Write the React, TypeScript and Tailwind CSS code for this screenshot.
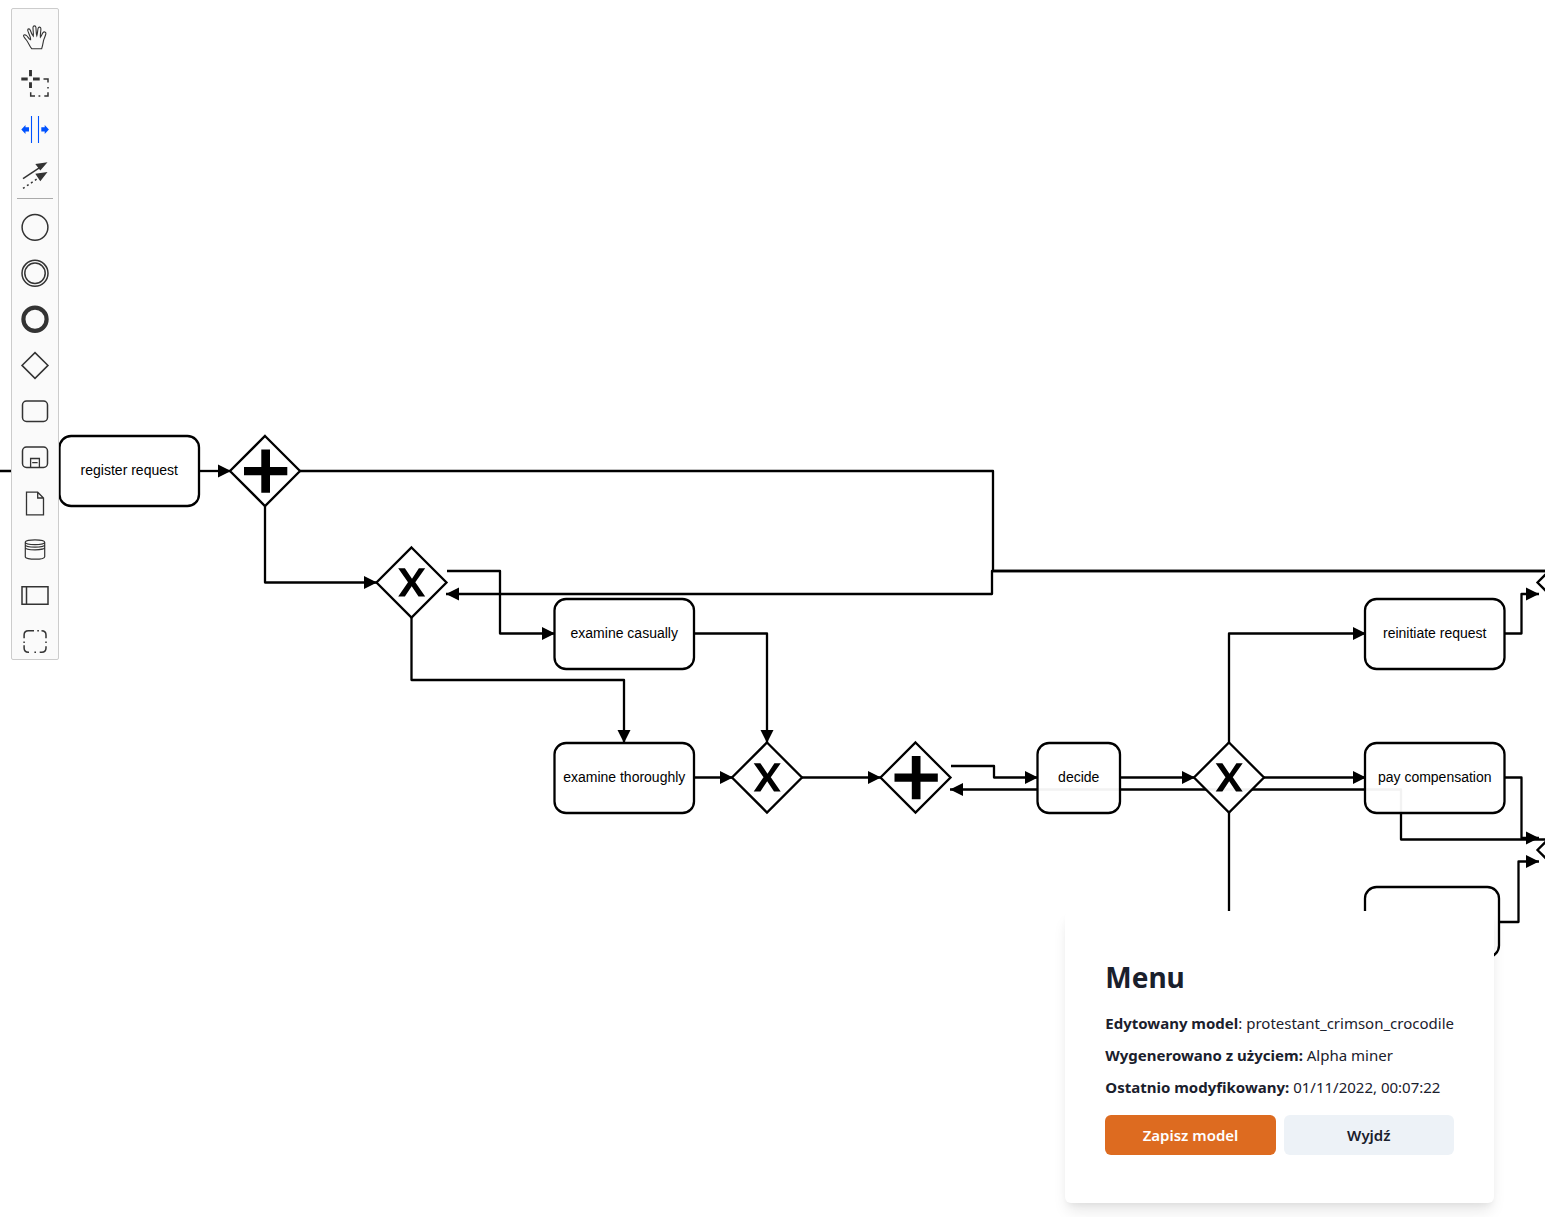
import type { ReactNode } from "react";

type Point = [number, number];

const TOOLS: { label: string; icon: ReactNode; active?: boolean }[] = [
  {
    label: "Activate the hand tool",
    icon: (
      <path d="M11.7 26.7C9.5 24 8.5 20.500 6 17.500C4.800 16 3.300 14.800 3.500 13.700C4 12.300 5.800 12.700 7 14C8.200 15.300 9 17.300 10.600 17.700C11 15 8 10.500 7.700 8.300C7.600 6.500 9.700 6.300 10.200 8C11 10.300 11.800 12.500 13.300 14.200C13.800 11.500 12.800 8 13 5.300C13.200 3.500 15.700 3.400 15.900 5.300C16.200 8 16 11 16.800 13.700C17.600 11.500 17.500 9 18.100 6.300C18.500 4.500 20.900 4.800 20.900 6.700C20.900 9.500 20 12.500 20.400 15.200C21.500 14 22 12 23 10.700C24 9.300 26.100 10 25.900 11.700C25.500 14 24 16.500 23.500 18.700C23 21.500 22.600 24 21.700 26.700Z" strokeWidth="1.100" />
    ),
  },
  {
    label: "Activate the lasso tool",
    icon: (
      <>
        <path d="M10.500 2V8.200M10.500 14.200V20M1.300 11H7.700M13 11H19.700" strokeWidth="2.900" />
        <path d="M23.500 11H28V14.500M28 19V20.500M28 24.300V28H24.300M20.300 28H18.500M15 28H10.700V24.300" strokeWidth="1.500" />
      </>
    ),
  },
  {
    label: "Activate the create/remove space tool",
    active: true,
    icon: (
      <>
        <path d="M11.500 2V29M18.500 2V29" strokeWidth="1.100" />
        <path d="M1.300 15.400L5.500 10.900V13.300H9V17.500H5.500V19.900ZM28.900 15.400L24.700 10.900V13.300H21.300V17.500H24.700V19.900Z" fill="currentColor" stroke="none" />
      </>
    ),
  },
  {
    label: "Activate the global connect tool",
    icon: (
      <>
        <path d="M3 18.700L20 7.400" strokeWidth="1.500" />
        <path d="M3 28.400L19 17.600" strokeWidth="1.500" strokeDasharray="2 2.800" />
        <path d="M27.500 2.200L15.300 3.900L20.300 10.600ZM27.500 12L15.300 13.700L20.300 21.200Z" fill="currentColor" stroke="none" />
      </>
    ),
  },
  { label: "Create start event", icon: <circle cx="15" cy="15.300" r="12.900" /> },
  {
    label: "Create intermediate event",
    icon: (
      <>
        <circle cx="15" cy="15.300" r="13" />
        <circle cx="15" cy="15.300" r="10.200" />
      </>
    ),
  },
  { label: "Create end event", icon: <circle cx="15" cy="15.300" r="11.600" strokeWidth="4.200" /> },
  { label: "Create gateway", icon: <path d="M15 2.600L28 15.400L15 28.400L2 15.400Z" /> },
  { label: "Create task", icon: <rect x="2.500" y="5" width="25" height="20.500" rx="4" /> },
  {
    label: "Create expanded sub-process",
    icon: (
      <>
        <rect x="2.500" y="5" width="25" height="20.500" rx="4" />
        <path d="M10.600 25.500V16.500H19.400V25.500M12.200 20.700H17.600" strokeWidth="1.300" />
      </>
    ),
  },
  {
    label: "Create data object",
    icon: <path d="M6.500 4.200H17.700L23.500 10V26.800H6.500ZM17.700 4.200V10H23.500" strokeWidth="1.300" />,
  },
  {
    label: "Create data store",
    icon: (
      <path d="M5.300 8.200C5.300 5 24.700 5 24.700 8.200V22.700C24.700 26 5.300 26 5.300 22.700ZM5.300 8.200C5.300 11.400 24.700 11.400 24.700 8.200M5.300 10.800C5.300 14 24.700 14 24.700 10.800M5.300 13.400C5.300 16.600 24.700 16.600 24.700 13.400" strokeWidth="1.200" />
    ),
  },
  {
    label: "Create pool/participant",
    icon: <path d="M2 6.800H28V24.300H2ZM6.500 6.800V24.300" />,
  },
  {
    label: "Create group",
    icon: (
      <path d="M4.100 12.300V9Q4.100 4.700 8.400 4.700H14M17.300 4.700H18.900M21.500 4.700Q26 4.700 26 9V12.300M26 15.600V17M26 20.300V22Q26 26.200 21.700 26.200H19.700M16 26.200H14.400M9 26.200H8.400Q4.100 26.200 4.100 22V19.300M4.100 15.600V17" strokeWidth="1.500" />
    ),
  },
];

const FLOWS: { points: Point[]; plain?: boolean }[] = [
  { points: [[0, 471], [59, 471]], plain: true },
  { points: [[199, 471], [231, 471]] },
  { points: [[300, 471], [993, 471], [993, 571], [1600, 571]], plain: true },
  { points: [[1600, 571], [992, 571], [992, 594], [446, 594]] },
  { points: [[265, 506], [265, 582.5], [377, 582.5]] },
  { points: [[447, 571], [500, 571], [500, 633.5], [555, 633.5]] },
  { points: [[411.5, 617], [411.5, 680], [624, 680], [624, 743]] },
  { points: [[694, 633.5], [767, 633.5], [767, 743]] },
  { points: [[694, 777.5], [733, 777.5]] },
  { points: [[802, 777.5], [881, 777.5]] },
  { points: [[951, 766], [994, 766], [994, 777.5], [1038, 777.5]] },
  { points: [[1120, 777.5], [1195, 777.5]] },
  { points: [[1229, 743], [1229, 633.5], [1366, 633.5]] },
  { points: [[1264, 777.5], [1366, 777.5]] },
  { points: [[1229, 812], [1229, 1000]], plain: true },
  { points: [[1504, 633.5], [1521.5, 633.5], [1521.5, 594], [1539, 594]] },
  { points: [[1504, 777.5], [1521.5, 777.5], [1521.5, 838], [1539, 838]] },
  { points: [[1600, 839.5], [1401, 839.5], [1401, 789.5], [950, 789.5]] },
  { points: [[1499, 922], [1518.5, 922], [1518.5, 861.5], [1539, 861.5]] },
];

const TASKS = [
  { x: 59.5, y: 436, width: 139.5, label: "register request" },
  { x: 554.5, y: 599, width: 139.5, label: "examine casually" },
  { x: 554.5, y: 743, width: 139.5, label: "examine thoroughly" },
  { x: 1037.5, y: 743, width: 82.5, label: "decide" },
  { x: 1365, y: 599, width: 139.5, label: "reinitiate request" },
  { x: 1365, y: 743, width: 139.5, label: "pay compensation" },
  { x: 1365, y: 887, width: 134, label: "" },
];

const GATEWAYS: { x: number; y: number; kind: "parallel" | "exclusive" }[] = [
  { x: 265, y: 471, kind: "parallel" },
  { x: 411.5, y: 582.5, kind: "exclusive" },
  { x: 767, y: 777.5, kind: "exclusive" },
  { x: 915.5, y: 777.5, kind: "parallel" },
  { x: 1229, y: 777.5, kind: "exclusive" },
  { x: 1572.5, y: 582.5, kind: "exclusive" },
  { x: 1572.5, y: 850, kind: "parallel" },
];

function Diagram() {
  return (
    <svg className="block h-full w-full" role="img" aria-label="BPMN model">
      <defs>
        <marker id="flow-end" markerUnits="userSpaceOnUse" markerWidth="14" markerHeight="14" refX="13" refY="7" orient="auto">
          <path d="M0 0.500L13 7L0 13.500Z" />
        </marker>
      </defs>
      <g fill="none" stroke="black" strokeWidth="2.300" strokeLinejoin="round">
        {FLOWS.map((flow, i) => (
          <polyline
            key={i}
            points={flow.points.map((p) => p.join(",")).join(" ")}
            markerEnd={flow.plain ? undefined : "url(#flow-end)"}
          />
        ))}
      </g>
      {TASKS.map((task) => (
        <g key={`${task.x}-${task.y}`}>
          <rect x={task.x} y={task.y} width={task.width} height="70" rx="11.600" fill="white" fillOpacity="0.950" stroke="black" strokeWidth="2.300" />
          <text x={task.x + task.width / 2} y={task.y + 39} textAnchor="middle" className="font-['Liberation_Sans',Arial,sans-serif] text-[14px]">
            {task.label}
          </text>
        </g>
      ))}
      {GATEWAYS.map((g) => (
        <g key={`${g.x}-${g.y}`} transform={`translate(${g.x} ${g.y})`}>
          <path d="M0 -35L35 0L0 35L-35 0Z" fill="white" fillOpacity="0.950" stroke="black" strokeWidth="2.300" />
          {g.kind === "parallel" ? (
            <path d="M-3.700 -21.500H5V-4H22.300V4.300H5V21.700H-3.700V4.300H-21V-4H-3.700Z" />
          ) : (
            <path d="M-13.300 -14.300H-6.600L0.500 -3.700L7.400 -14.300H13.700L3.800 -0.300L13.700 14H7L0.200 3.700L-6.600 14H-13.300L-3.500 -0.300Z" />
          )}
        </g>
      ))}
    </svg>
  );
}

function ToolButton({ label, icon, active }: { label: string; icon: ReactNode; active?: boolean }) {
  return (
    <button
      type="button"
      aria-label={label}
      title={label}
      className={`flex h-[46px] w-full items-center justify-center pt-2.5 ${active ? "text-[#0052ff]" : "text-[#333333]"}`}
    >
      <svg viewBox="0 0 30 30" className="size-[30px]" fill="none" stroke="currentColor" strokeWidth="1.500">
        {icon}
      </svg>
    </button>
  );
}

function Palette() {
  return (
    <nav aria-label="Palette" className="absolute top-2 left-[11px] w-12 rounded-xs border border-[#cccccc] bg-[#fafafa]">
      {TOOLS.slice(0, 4).map((tool) => (
        <ToolButton key={tool.label} {...tool} />
      ))}
      <hr className="mx-[5px] mt-[5px] border-t border-[#aaaaaa]" />
      {TOOLS.slice(4).map((tool) => (
        <ToolButton key={tool.label} {...tool} />
      ))}
    </nav>
  );
}

function Detail({ name, value }: { name: ReactNode; value: string }) {
  return (
    <p>
      {name} {value}
    </p>
  );
}

function MenuCard() {
  return (
    <section className="absolute right-[51px] bottom-3.5 rounded-md bg-white px-10 py-12 font-['Noto_Sans',sans-serif] text-[15px] leading-6 text-[#1a202c] shadow-[0_10px_15px_-3px_rgba(0,0,0,0.1),0_4px_6px_-2px_rgba(0,0,0,0.05)]">
      <h1 className="mb-4 text-[28px] leading-9 font-bold">Menu</h1>
      <div className="flex flex-col gap-2">
        <Detail name={<><b>Edytowany model</b>:</>} value="protestant_crimson_crocodile" />
        <Detail name={<b>Wygenerowano z użyciem:</b>} value="Alpha miner" />
        <Detail name={<b>Ostatnio modyfikowany:</b>} value="01/11/2022, 00:07:22" />
      </div>
      <div className="mt-4 grid grid-cols-2 gap-2 font-semibold">
        <button type="button" className="h-10 rounded-md bg-[#dd6b20] text-white">Zapisz model</button>
        <button type="button" className="h-10 rounded-md bg-[#edf2f7]">Wyjdź</button>
      </div>
    </section>
  );
}

export default function App() {
  return (
    <main className="relative h-screen overflow-hidden bg-white">
      <Diagram />
      <Palette />
      <MenuCard />
    </main>
  );
}
